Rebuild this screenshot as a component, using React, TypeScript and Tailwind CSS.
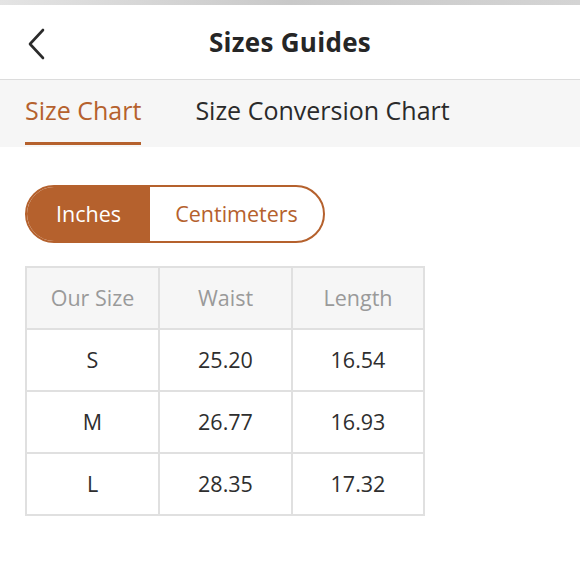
const rows = [
  { size: "S", waist: "25.20", length: "16.54" },
  { size: "M", waist: "26.77", length: "16.93" },
  { size: "L", waist: "28.35", length: "17.32" },
];

export default function App() {
  return (
    <div className="w-[580px] h-[580px] bg-white overflow-hidden" style={{ fontFamily: '"Open Sans", sans-serif' }}>
      <div className="h-[5px] bg-gradient-to-r from-[#e4e4e4] via-[#c9c9c9] to-[#d4d4d4]" />
      <div className="relative h-[75px] flex items-center justify-center border-b border-[#dcdcdc]">
        <svg className="absolute left-[25px] top-[22px]" width="22" height="34" viewBox="0 0 22 34" fill="none">
          <path d="M18 3 L5 17 L18 31" stroke="#2b2b2b" strokeWidth="2.6" strokeLinecap="round" strokeLinejoin="round" />
        </svg>
        <span className="text-[26px] font-bold text-[#262626] tracking-[0.3px]">Sizes Guides</span>
      </div>
      <div className="h-[67px] bg-[#f6f6f6] flex items-stretch pl-[25px] gap-[54px]">
        <div className="flex flex-col justify-center relative pb-[6px]">
          <span className="text-[25px] text-[#b5612d] leading-none">Size Chart</span>
          <div className="absolute bottom-[2px] left-0 right-0 h-[3px] bg-[#b5612d]" />
        </div>
        <div className="flex items-center pb-[6px]">
          <span className="text-[25px] text-[#2a2a2a] leading-none">Size Conversion Chart</span>
        </div>
      </div>
      <div className="px-[25px] pt-[38px]">
        <div className="flex w-[300px] h-[58px] rounded-full border-2 border-[#b5612d] overflow-hidden">
          <div className="w-[123px] bg-[#b5612d] flex items-center justify-center text-white text-[21.5px]">Inches</div>
          <div className="flex-1 flex items-center justify-center text-[#b5612d] text-[21.5px]">Centimeters</div>
        </div>
        <table className="mt-[23px] w-[400px] border-collapse text-[21.5px]">
          <thead>
            <tr className="bg-[#f6f6f6] h-[62px]">
              <th className="w-[133px] border-2 border-[#e0e0e0] font-normal text-[#9a9a9a]">Our Size</th>
              <th className="w-[133px] border-2 border-[#e0e0e0] font-normal text-[#9a9a9a]">Waist</th>
              <th className="border-2 border-[#e0e0e0] font-normal text-[#9a9a9a]">Length</th>
            </tr>
          </thead>
          <tbody>
            {rows.map((r) => (
              <tr key={r.size} className="h-[62px] text-[#2e2e2e] text-center">
                <td className="border-2 border-[#e0e0e0]">{r.size}</td>
                <td className="border-2 border-[#e0e0e0]">{r.waist}</td>
                <td className="border-2 border-[#e0e0e0]">{r.length}</td>
              </tr>
            ))}
          </tbody>
        </table>
      </div>
    </div>
  );
}
